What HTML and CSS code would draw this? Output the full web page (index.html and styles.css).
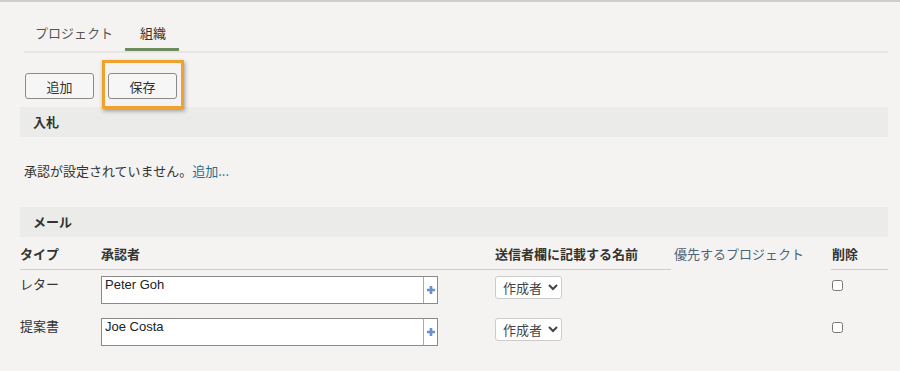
FILE: index.html
```html
<!DOCTYPE html>
<html lang="ja">
<head>
  <meta charset="UTF-8" />
  <title>組織</title>
  <link rel="stylesheet" href="styles.css">
</head>
<body>
  <div class="page">
    <div class="tabs">
      <a class="tab">プロジェクト</a>
      <a class="tab active">組織</a>
    </div>

    <div class="toolbar">
      <button class="btn">追加</button>
      <span class="highlight-wrap">
        <button class="btn">保存</button>
        <span class="highlight"></span>
      </span>
    </div>

    <div class="section-head">入札</div>
    <p class="empty">承認が設定されていません。<a class="link">追加...</a></p>

    <div class="section-head">メール</div>
    <table class="approvers">
      <thead>
        <tr>
          <th class="col-type">タイプ</th>
          <th class="col-approver">承認者</th>
          <th class="col-sender">送信者欄に記載する名前</th>
          <th class="col-project">優先するプロジェクト</th>
          <th class="col-del">削除</th>
        </tr>
      </thead>
      <tbody>
        <tr>
          <td>レター</td>
          <td>
            <div class="picker">
              <div class="picker-value">Peter Goh</div>
              <span class="picker-add"><svg width="8" height="8" viewBox="0 0 9 9"><path d="M3 0h3v3h3v3H6v3H3V6H0V3h3z" fill="#6a8fcf"/></svg></span>
            </div>
          </td>
          <td><select class="sel"><option>作成者</option></select></td>
          <td></td>
          <td><input type="checkbox" class="chk"></td>
        </tr>
        <tr>
          <td>提案書</td>
          <td>
            <div class="picker">
              <div class="picker-value">Joe Costa</div>
              <span class="picker-add"><svg width="8" height="8" viewBox="0 0 9 9"><path d="M3 0h3v3h3v3H6v3H3V6H0V3h3z" fill="#6a8fcf"/></svg></span>
            </div>
          </td>
          <td><select class="sel"><option>作成者</option></select></td>
          <td></td>
          <td><input type="checkbox" class="chk"></td>
        </tr>
      </tbody>
    </table>
  </div>
</body>
</html>
```

FILE: styles.css
```css
html, body {
  margin: 0;
  height: 100%;
}
body {
  background: #f4f3f1;
  border-top: 2px solid #cfcdca;
  font-family: "Noto Sans CJK JP", "Liberation Sans", sans-serif;
  font-size: 13px;
  color: #333;
}
.page {
  width: 868px;
  padding: 0 0 0 20px;
}
.tabs {
  display: flex;
  margin: 18px 0 0 4px;
  border-bottom: 2px solid #e8e6e3;
  height: 31px;
}
.tab {
  padding: 0 10px 0 11px;
  line-height: 26px;
  color: #555;
  margin-right: 2px;
}
.tab.active {
  padding: 0 13px 0 15px;
  color: #333;
  border-bottom: 3px solid #6e8b5f;
}
.toolbar {
  display: flex;
  gap: 14px;
  margin: 20px 0 8px 5px;
}
.btn {
  width: 69px;
  height: 26px;
  border: 1px solid #8a8a8a;
  border-radius: 3px;
  background: #f6f6f6;
  font-family: inherit;
  font-size: 13px;
  color: #333;
  padding: 0;
}
.highlight-wrap {
  position: relative;
  display: block;
}
.highlight {
  position: absolute;
  left: -6px;
  top: -13px;
  right: -7px;
  bottom: -10px;
  border: 3px solid #f0a22e;
  box-shadow: 1px 2px 4px rgba(0, 0, 0, 0.35);
}
.section-head {
  background: #ebebea;
  height: 30px;
  line-height: 30px;
  padding-left: 13px;
  font-weight: bold;
  color: #333;
}
.empty {
  margin: 0;
  padding: 24px 0 0 4px;
  height: 46px;
  line-height: 20px;
}
.link {
  color: #1f6e94;
}
.approvers {
  border-collapse: collapse;
  width: 868px;
}
.approvers th {
  text-align: left;
  font-weight: bold;
  height: 32px;
  padding: 0;
  border-bottom: 1px solid #cfcdca;
  vertical-align: middle;
}
.approvers th.col-project {
  font-weight: normal;
  color: #4d6478;
  border-bottom: none;
  padding-left: 3px;
}
.approvers th.col-del {
  padding-left: 1px;
}
.col-type { width: 81px; }
.col-approver { width: 394px; }
.col-sender { width: 176px; }
.col-project { width: 157px; }
.approvers td {
  vertical-align: top;
  padding: 6px 0 8px 0;
  height: 28px;
}
.approvers td:first-child {
  line-height: 16px;
  padding-top: 6px;
}
.picker {
  display: flex;
  width: 335px;
  height: 26px;
  border: 1px solid #8a8a8a;
  background: #fff;
}
.picker-value {
  flex: 1;
  padding: 1px 3px;
  font-family: "Liberation Sans", Arial, sans-serif;
  font-size: 13px;
  color: #222;
  line-height: 14px;
}
.picker-add {
  width: 13px;
  border-left: 1px solid #aaa;
  display: flex;
  align-items: center;
  justify-content: center;
}
.sel {
  height: 23px;
  border: 1px solid #ccc;
  border-radius: 3px;
  background: #fff;
  font-family: inherit;
  font-size: 13px;
  color: #444;
  padding: 0 2px 0 3px;
}
.chk {
  margin: 2px 0 0 1px;
  width: 11px;
  height: 11px;
}
```
